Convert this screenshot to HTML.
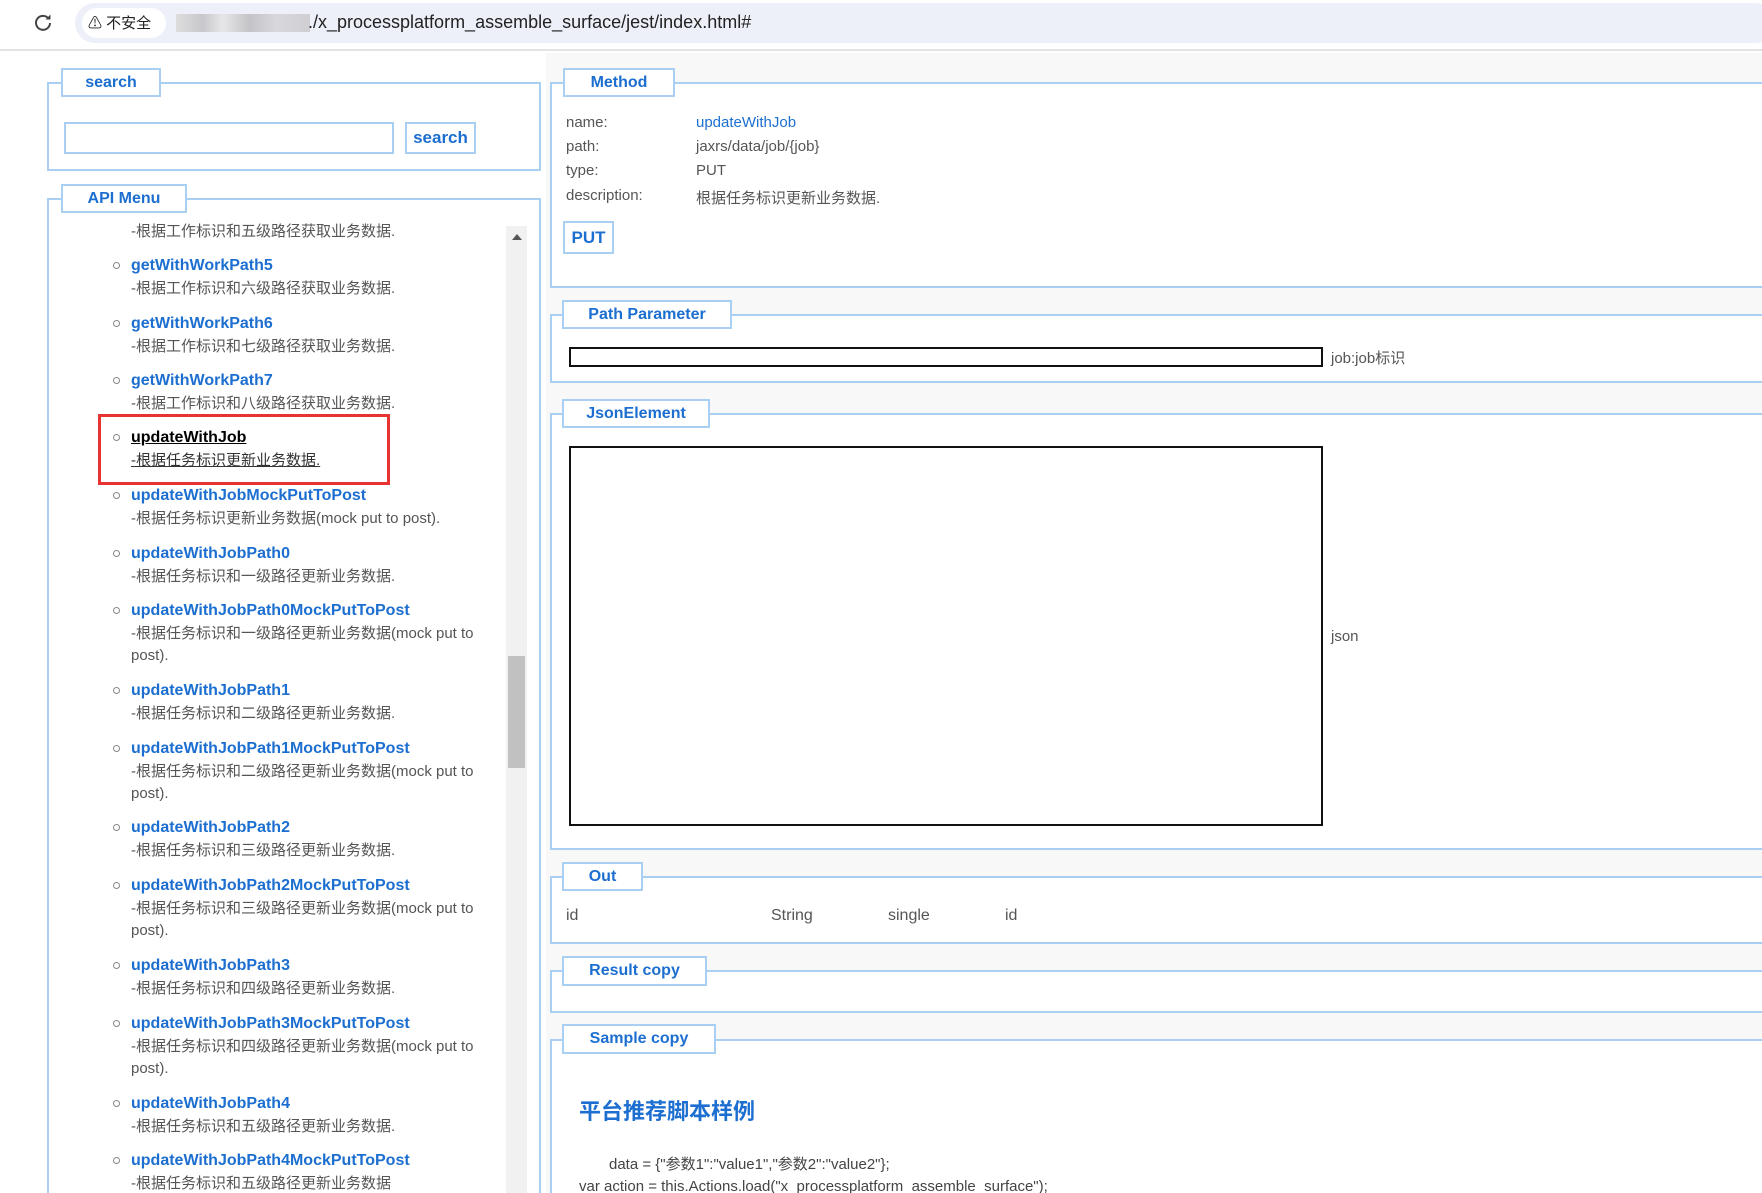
<!DOCTYPE html>
<html style="width:1762px;height:1193px;overflow:hidden"><head><meta charset="utf-8"><style>
*{box-sizing:border-box;margin:0;padding:0}
body{width:1762px;height:1193px;overflow:hidden;background:#fff;font-family:"Liberation Sans","Noto Sans CJK SC",sans-serif;position:relative;color:#555}
.a{position:absolute}
.fs{position:absolute;border:2px solid #a9d0f2;background:#fff}
.lg{position:absolute;border:2px solid #a9d0f2;background:#fff;color:#1c6fd0;font-weight:bold;font-size:16px;text-align:center}
.gray{background:#f8f8f8}
.it{position:absolute;left:131px;font-size:15px;line-height:22.5px;width:360px}
.it b{color:#1c6fd0;font-size:16px;display:block}
.it .d{color:#555}
.bul{position:absolute;left:113px;width:7px;height:7px;border:1.5px solid #888;border-radius:50%}
.lab{position:absolute;left:566px;font-size:15px;color:#555}
.val{position:absolute;left:696px;font-size:15px;color:#555}
</style></head><body>
<div class="a" style="left:0;top:0;width:1762px;height:51px;background:#fff;border-bottom:2px solid #e3e3e3"></div>
<div class="a" style="left:-4px;top:14px;color:#999;font-size:14px">›</div>
<svg class="a" style="left:33px;top:12px" width="20" height="20" viewBox="0 0 20 20"><path d="M15.5 6.5A7 7 0 1 0 17 11" fill="none" stroke="#444" stroke-width="2"/><path d="M12.5 7.5h5v-5z" fill="#444"/></svg>
<div class="a" style="left:75px;top:3px;width:1700px;height:40px;border-radius:20px;background:#edf0f9"></div>
<div class="a" style="left:82px;top:8px;width:84px;height:30px;border-radius:15px;background:#fff;font-size:15px;line-height:30px;color:#222;padding-left:6px"><span style="font-size:14px">⚠</span> 不安全</div>
<div class="a" style="left:176px;top:14px;width:134px;height:18px;background:linear-gradient(90deg,#ddd,#c8c8cc 20%,#e6e6e8 35%,#c4c4c8 55%,#d8d8dc 75%,#cfcfd3)"></div>
<div class="a" style="left:308px;top:10px;font-size:18px;color:#222;line-height:24px">./x_processplatform_assemble_surface/jest/index.html#</div>

<div class="fs" style="left:47px;top:82px;width:494px;height:89px"></div>
<div class="lg" style="left:61px;top:68px;width:100px;height:29px;line-height:25px">search</div>
<div class="a" style="left:64px;top:122px;width:330px;height:32px;border:2px solid #a9d0f2"></div>
<div class="a" style="left:405px;top:122px;width:71px;height:32px;border:2px solid #a9d0f2;color:#1c6fd0;font-weight:bold;font-size:17px;text-align:center;line-height:28px">search</div>

<div class="fs" style="left:47px;top:198px;width:494px;height:1000px"></div>
<div class="lg" style="left:61px;top:184px;width:126px;height:29px;line-height:25px">API Menu</div>
<div class="a" style="left:506px;top:226px;width:21px;height:970px;background:#f1f1f1"></div>
<div class="a" style="left:512px;top:234px;width:0;height:0;border-left:5px solid transparent;border-right:5px solid transparent;border-bottom:6px solid #555"></div>
<div class="a" style="left:508px;top:656px;width:17px;height:112px;background:#c1c1c1"></div>

<div class="it" style="top:221px"><span class="d">-根据工作标识和五级路径获取业务数据.</span></div>
<div class="bul" style="top:262px"></div><div class="it" style="top:255px"><b>getWithWorkPath5</b><span class="d">-根据工作标识和六级路径获取业务数据.</span></div>
<div class="bul" style="top:320px"></div><div class="it" style="top:313px"><b>getWithWorkPath6</b><span class="d">-根据工作标识和七级路径获取业务数据.</span></div>
<div class="bul" style="top:377px"></div><div class="it" style="top:370px"><b>getWithWorkPath7</b><span class="d">-根据工作标识和八级路径获取业务数据.</span></div>
<div class="bul" style="top:434px"></div><div class="it" style="top:427px"><b style="color:#000;text-decoration:underline">updateWithJob</b><span class="d" style="text-decoration:underline;color:#333">-根据任务标识更新业务数据.</span></div>
<div class="a" style="left:98px;top:414px;width:292px;height:71px;border:3px solid #e83333"></div>
<div class="bul" style="top:492px"></div><div class="it" style="top:485px"><b>updateWithJobMockPutToPost</b><span class="d">-根据任务标识更新业务数据(mock put to post).</span></div>
<div class="bul" style="top:550px"></div><div class="it" style="top:543px"><b>updateWithJobPath0</b><span class="d">-根据任务标识和一级路径更新业务数据.</span></div>
<div class="bul" style="top:607px"></div><div class="it" style="top:600px"><b>updateWithJobPath0MockPutToPost</b><span class="d">-根据任务标识和一级路径更新业务数据(mock put to post).</span></div>
<div class="bul" style="top:687px"></div><div class="it" style="top:680px"><b>updateWithJobPath1</b><span class="d">-根据任务标识和二级路径更新业务数据.</span></div>
<div class="bul" style="top:745px"></div><div class="it" style="top:738px"><b>updateWithJobPath1MockPutToPost</b><span class="d">-根据任务标识和二级路径更新业务数据(mock put to post).</span></div>
<div class="bul" style="top:824px"></div><div class="it" style="top:817px"><b>updateWithJobPath2</b><span class="d">-根据任务标识和三级路径更新业务数据.</span></div>
<div class="bul" style="top:882px"></div><div class="it" style="top:875px"><b>updateWithJobPath2MockPutToPost</b><span class="d">-根据任务标识和三级路径更新业务数据(mock put to post).</span></div>
<div class="bul" style="top:962px"></div><div class="it" style="top:955px"><b>updateWithJobPath3</b><span class="d">-根据任务标识和四级路径更新业务数据.</span></div>
<div class="bul" style="top:1020px"></div><div class="it" style="top:1013px"><b>updateWithJobPath3MockPutToPost</b><span class="d">-根据任务标识和四级路径更新业务数据(mock put to post).</span></div>
<div class="bul" style="top:1100px"></div><div class="it" style="top:1093px"><b>updateWithJobPath4</b><span class="d">-根据任务标识和五级路径更新业务数据.</span></div>
<div class="bul" style="top:1157px"></div><div class="it" style="top:1150px"><b>updateWithJobPath4MockPutToPost</b><span class="d">-根据任务标识和五级路径更新业务数据</span></div>

<div class="a gray" style="left:546px;top:53px;width:1216px;height:1140px"></div>
<div class="fs" style="left:550px;top:82px;width:1230px;height:206px"></div>
<div class="lg" style="left:563px;top:68px;width:112px;height:29px;line-height:25px">Method</div>
<div class="lab" style="top:114px">name:</div><div class="val" style="top:114px;color:#1c6fd0">updateWithJob</div>
<div class="lab" style="top:138px">path:</div><div class="val" style="top:138px">jaxrs/data/job/{job}</div>
<div class="lab" style="top:162px">type:</div><div class="val" style="top:162px">PUT</div>
<div class="lab" style="top:187px">description:</div><div class="val" style="top:187px">根据任务标识更新业务数据.</div>
<div class="a" style="left:563px;top:221px;width:51px;height:33px;border:2px solid #a9d0f2;color:#1c6fd0;font-weight:bold;font-size:17px;text-align:center;line-height:29px">PUT</div>

<div class="fs" style="left:550px;top:314px;width:1230px;height:69px"></div>
<div class="lg" style="left:562px;top:300px;width:170px;height:29px;line-height:25px">Path Parameter</div>
<div class="a" style="left:569px;top:347px;width:754px;height:20px;border:2px solid #111;background:#fff"></div>
<div class="a" style="left:1331px;top:347px;font-size:15px">job:job标识</div>

<div class="fs" style="left:550px;top:413px;width:1230px;height:437px"></div>
<div class="lg" style="left:562px;top:399px;width:148px;height:29px;line-height:25px">JsonElement</div>
<div class="a" style="left:569px;top:446px;width:754px;height:380px;border:2px solid #111;background:#fff"></div>
<div class="a" style="left:1331px;top:628px;font-size:15px">json</div>

<div class="fs" style="left:550px;top:876px;width:1230px;height:68px"></div>
<div class="lg" style="left:562px;top:862px;width:81px;height:29px;line-height:25px">Out</div>
<div class="a" style="left:566px;top:907px;font-size:16px">id</div>
<div class="a" style="left:771px;top:907px;font-size:16px">String</div>
<div class="a" style="left:888px;top:907px;font-size:16px">single</div>
<div class="a" style="left:1005px;top:907px;font-size:16px">id</div>

<div class="fs" style="left:550px;top:970px;width:1230px;height:43px"></div>
<div class="lg" style="left:562px;top:956px;width:145px;height:30px;line-height:26px">Result copy</div>

<div class="fs" style="left:550px;top:1039px;width:1230px;height:160px"></div>
<div class="lg" style="left:562px;top:1024px;width:154px;height:30px;line-height:26px">Sample copy</div>
<div class="a" style="left:579px;top:1094px;font-size:22px;font-weight:bold;color:#1c6fd0">平台推荐脚本样例</div>
<div class="a" style="left:609px;top:1153px;font-size:15px;color:#444">data = {"参数1":"value1","参数2":"value2"};</div>
<div class="a" style="left:579px;top:1178px;font-size:15px;color:#444;white-space:nowrap">var action = this.Actions.load("x_processplatform_assemble_surface");</div>
</body></html>
